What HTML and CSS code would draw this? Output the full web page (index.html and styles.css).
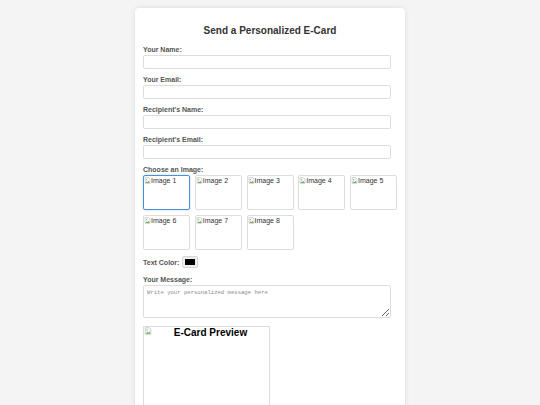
FILE: index.html
```html
<!DOCTYPE html>
<html lang="en">
<head>
<meta charset="utf-8">
<title>Send a Personalized E-Card</title>
<link rel="stylesheet" href="styles.css">
</head>
<body>
<div class="card">
  <h1 class="title">Send a Personalized E-Card</h1>
  <div class="field">
    <label class="label">Your Name:</label>
    <input class="input" type="text">
  </div>
  <div class="field">
    <label class="label">Your Email:</label>
    <input class="input" type="email">
  </div>
  <div class="field">
    <label class="label">Recipient's Name:</label>
    <input class="input" type="text">
  </div>
  <div class="field">
    <label class="label">Recipient's Email:</label>
    <input class="input" type="email">
  </div>
  <div class="field">
    <label class="label">Choose an Image:</label>
    <div class="thumbs">
      <div class="thumb selected"><svg class="broken" viewBox="0 0 16 16"><path d="M2.5 1.5h8l3 3v10h-11z" fill="#fff" stroke="#9a9a9a"/><path d="M3.5 13.5l3-4 2 2 2-3 2.5 5z" fill="#6cb45a"/><circle cx="6" cy="6" r="1.5" fill="#6aa8e0"/></svg>Image 1</div>
      <div class="thumb"><svg class="broken" viewBox="0 0 16 16"><path d="M2.5 1.5h8l3 3v10h-11z" fill="#fff" stroke="#9a9a9a"/><path d="M3.5 13.5l3-4 2 2 2-3 2.5 5z" fill="#6cb45a"/><circle cx="6" cy="6" r="1.5" fill="#6aa8e0"/></svg>Image 2</div>
      <div class="thumb"><svg class="broken" viewBox="0 0 16 16"><path d="M2.5 1.5h8l3 3v10h-11z" fill="#fff" stroke="#9a9a9a"/><path d="M3.5 13.5l3-4 2 2 2-3 2.5 5z" fill="#6cb45a"/><circle cx="6" cy="6" r="1.5" fill="#6aa8e0"/></svg>Image 3</div>
      <div class="thumb"><svg class="broken" viewBox="0 0 16 16"><path d="M2.5 1.5h8l3 3v10h-11z" fill="#fff" stroke="#9a9a9a"/><path d="M3.5 13.5l3-4 2 2 2-3 2.5 5z" fill="#6cb45a"/><circle cx="6" cy="6" r="1.5" fill="#6aa8e0"/></svg>Image 4</div>
      <div class="thumb"><svg class="broken" viewBox="0 0 16 16"><path d="M2.5 1.5h8l3 3v10h-11z" fill="#fff" stroke="#9a9a9a"/><path d="M3.5 13.5l3-4 2 2 2-3 2.5 5z" fill="#6cb45a"/><circle cx="6" cy="6" r="1.5" fill="#6aa8e0"/></svg>Image 5</div>
      <div class="thumb"><svg class="broken" viewBox="0 0 16 16"><path d="M2.5 1.5h8l3 3v10h-11z" fill="#fff" stroke="#9a9a9a"/><path d="M3.5 13.5l3-4 2 2 2-3 2.5 5z" fill="#6cb45a"/><circle cx="6" cy="6" r="1.5" fill="#6aa8e0"/></svg>Image 6</div>
      <div class="thumb"><svg class="broken" viewBox="0 0 16 16"><path d="M2.5 1.5h8l3 3v10h-11z" fill="#fff" stroke="#9a9a9a"/><path d="M3.5 13.5l3-4 2 2 2-3 2.5 5z" fill="#6cb45a"/><circle cx="6" cy="6" r="1.5" fill="#6aa8e0"/></svg>Image 7</div>
      <div class="thumb"><svg class="broken" viewBox="0 0 16 16"><path d="M2.5 1.5h8l3 3v10h-11z" fill="#fff" stroke="#9a9a9a"/><path d="M3.5 13.5l3-4 2 2 2-3 2.5 5z" fill="#6cb45a"/><circle cx="6" cy="6" r="1.5" fill="#6aa8e0"/></svg>Image 8</div>
    </div>
  </div>
  <div class="color-row">
    <label class="label inline">Text Color:</label>
    <span class="swatch"><span class="swatch-fill"></span></span>
  </div>
  <div class="field">
    <label class="label">Your Message:</label>
    <textarea class="message" placeholder="Write your personalized message here"></textarea>
  </div>
  <div class="preview">
    <svg class="broken float" viewBox="0 0 16 16"><path d="M2.5 1.5h8l3 3v10h-11z" fill="#fff" stroke="#9a9a9a"/><path d="M3.5 13.5l3-4 2 2 2-3 2.5 5z" fill="#6cb45a"/><circle cx="6" cy="6" r="1.5" fill="#6aa8e0"/></svg>
    <h2 class="preview-title">E-Card Preview</h2>
  </div>
</div>
</body>
</html>
```
FILE: styles.css
```css
html, body {
  margin: 0;
  padding: 0;
}
body {
  background: #f4f4f4;
  font-family: "Liberation Sans", Arial, sans-serif;
  padding-top: 8px;
  overflow: hidden;
}
.card {
  width: 270px;
  min-height: 420px;
  margin: 0 auto;
  background: #fff;
  border-radius: 4px;
  box-shadow: 0 0 5px rgba(0, 0, 0, 0.1);
  padding: 8px 8px 0;
  box-sizing: border-box;
}
.title {
  margin: 9px 0 8px;
  font-size: 10px;
  line-height: 12px;
  font-weight: bold;
  text-align: center;
  color: #333;
}
.field {
  margin-bottom: 6px;
}
.label {
  display: block;
  font-size: 7px;
  line-height: 9px;
  font-weight: bold;
  color: #555;
  margin-bottom: 1px;
}
.label.inline {
  margin-bottom: 0;
}
.input {
  display: block;
  width: 248px;
  height: 14px;
  box-sizing: border-box;
  border: 1px solid #ddd;
  border-radius: 2px;
  padding: 0 3px;
  margin: 0;
  background: #fff;
  outline: none;
}
.thumbs {
  display: flex;
  flex-wrap: wrap;
  gap: 5px 4.75px;
  width: 254px;
}
.thumb {
  width: 47px;
  height: 35px;
  box-sizing: border-box;
  border: 1px solid #ddd;
  border-radius: 2px;
  font-size: 7px;
  line-height: 8px;
  color: #333;
  padding-top: 1px;
  white-space: nowrap;
  overflow: hidden;
}
.thumb.selected {
  border-color: #4a90d9;
  box-shadow: 0 0 2px rgba(74, 144, 217, 0.5);
}
.broken {
  width: 7px;
  height: 7px;
  vertical-align: -1px;
}
.color-row {
  display: flex;
  align-items: center;
  gap: 3px;
  margin-top: 6px;
  margin-bottom: 7px;
}
.swatch {
  width: 16px;
  height: 12px;
  box-sizing: border-box;
  border: 1px solid #d6d6d6;
  border-radius: 2px;
  background: #efefef;
  padding: 2px 2px;
  display: flex;
}
.swatch-fill {
  flex: 1;
  background: #000;
}
.message {
  display: block;
  width: 248px;
  height: 33px;
  box-sizing: border-box;
  border: 1px solid #ddd;
  border-radius: 2px;
  padding: 3px 3px;
  margin: 0;
  font-family: "Liberation Mono", "DejaVu Sans Mono", monospace;
  font-size: 5.6px;
  line-height: 7px;
  resize: vertical;
  outline: none;
}
.message::placeholder {
  color: #8a8a8a;
}
.field-last {
  margin-bottom: 0;
}
.preview {
  width: 127px;
  height: 110px;
  box-sizing: border-box;
  border: 1px solid #ddd;
  margin-top: 8px;
}
.broken.float {
  float: left;
  width: 8px;
  height: 8px;
}
.preview-title {
  margin: 0;
  font-size: 10px;
  line-height: 12px;
  font-weight: bold;
  color: #000;
  text-align: center;
}
```
